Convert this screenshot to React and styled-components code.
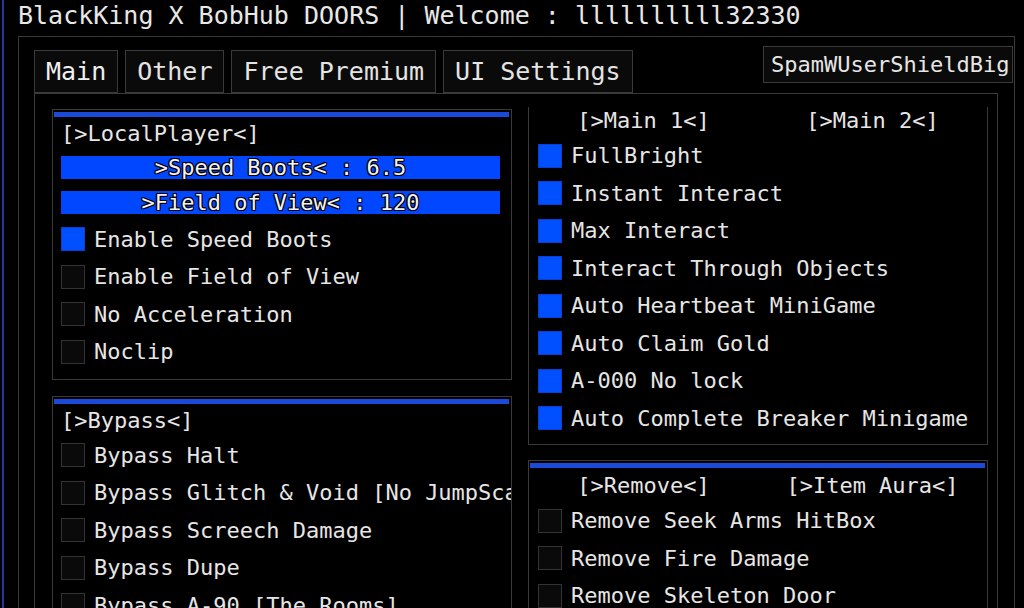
import React from 'react';
import styled, { createGlobalStyle } from 'styled-components';

const GlobalStyle = createGlobalStyle`
  html, body {
    margin: 0;
    padding: 0;
    background: #000;
    overflow: hidden;
  }
  body {
    width: 1024px;
    height: 608px;
    font-family: "DejaVu Sans Mono", "Liberation Mono", monospace;
    color: #e6e6e6;
  }
`;

const Screen = styled.div`
  display: flex;
  height: 608px;
  overflow: hidden;
  background: #000;
`;

const EdgeStripe = styled.div`
  flex: 0 0 2px;
  margin-left: 2px;
  background: #2234a8;
`;

const Window = styled.div`
  flex: 1;
  min-width: 0;
  display: flex;
  flex-direction: column;
  padding-left: 14px;
`;

const Title = styled.div`
  padding-top: 1px;
  font-size: 25px;
  white-space: nowrap;
  color: #e8e8e8;
`;

const OuterFrame = styled.div`
  margin-top: 6px;
  width: 997px;
  flex: 1;
  min-height: 0;
  box-sizing: border-box;
  border: 1px solid #3a3a3a;
  border-bottom: none;
  padding: 9px 0 0 15px;
  display: flex;
  flex-direction: column;
`;

const TabRow = styled.div`
  display: flex;
  align-items: flex-start;
  height: 47px;
`;

const Tab = styled.div`
  margin-top: 4px;
  margin-right: 7px;
  height: 43px;
  box-sizing: border-box;
  padding: 0 11px;
  display: flex;
  align-items: center;
  font-size: 25px;
  background: #0a0a0a;
  border: 1px solid #3a3a3a;
  color: ${(p) => (p.$active ? '#f0f0f0' : '#e4e4e4')};
  white-space: nowrap;
`;

const SpamBox = styled.div`
  margin-left: auto;
  margin-right: 1px;
  width: 250px;
  height: 37px;
  box-sizing: border-box;
  padding-left: 7px;
  display: flex;
  align-items: center;
  font-size: 22px;
  background: #0a0a0a;
  border: 1px solid #3a3a3a;
  white-space: nowrap;
  overflow: hidden;
`;

const ContentFrame = styled.div`
  flex: 1;
  min-height: 0;
  width: 964px;
  box-sizing: border-box;
  border: 1px solid #3a3a3a;
  border-bottom: none;
  padding: 13px 9px 0 17px;
`;

const Columns = styled.div`
  display: grid;
  grid-template-columns: 460px 460px;
  column-gap: 16px;
  align-items: start;
`;

const LeftColumn = styled.div`
  padding-top: 2px;
  display: flex;
  flex-direction: column;
  gap: 16px;
`;

const RightColumn = styled.div`
  overflow: hidden;
  display: flex;
  flex-direction: column;
  gap: 15px;
  height: 600px;
`;

const Panel = styled.section`
  box-sizing: border-box;
  border: 1px solid #3a3a3a;
  background: #000;
  overflow: hidden;
  margin-top: ${(p) => (p.$scrolled ? '-12px' : '0')};
  flex-shrink: 0;
`;

const TopBar = styled.div`
  height: 5px;
  margin: 2px 2px 0 1px;
  background: #1c4ad8;
`;

const Header = styled.div`
  height: 32px;
  display: flex;
  align-items: center;
  padding-left: 8px;
  font-size: 22px;
  white-space: nowrap;
`;

const SplitHeader = styled.div`
  height: 34px;
  display: grid;
  grid-template-columns: 1fr 1fr;
  align-items: center;
  font-size: 22px;
  white-space: nowrap;
  text-align: center;
`;

const Body = styled.div`
  padding: 0 11px ${(p) => p.$bottom ?? 9}px ${(p) => p.$inset || 8}px;
`;

const Slider = styled.div`
  height: 23px;
  margin-top: ${(p) => p.$gap}px;
  background: #0047ff;
  display: flex;
  align-items: center;
  justify-content: center;
  font-size: 22px;
  color: #f2f2f2;
  white-space: nowrap;
  text-shadow:
    -1px -1px 0 #000, 1px -1px 0 #000, -1px 1px 0 #000, 1px 1px 0 #000,
    0 -1px 0 #000, 0 1px 0 #000, -1px 0 0 #000, 1px 0 0 #000;
`;

const RowList = styled.div`
  margin-top: ${(p) => p.$gap || 0}px;
`;

const Row = styled.div`
  height: 37.5px;
  display: flex;
  align-items: center;
  gap: 9px;
  font-size: 22px;
  white-space: nowrap;
`;

const Box = styled.span`
  flex: 0 0 24px;
  height: 24px;
  box-sizing: border-box;
  border: 1px solid ${(p) => (p.$on ? '#0a3fd0' : '#333')};
  background: ${(p) => (p.$on ? '#0050ff' : '#0a0a0a')};
`;

const Toggle = ({ on, children }) => (
  <Row>
    <Box $on={on} />
    <span>{children}</span>
  </Row>
);

const localToggles = [
  ['Enable Speed Boots', true],
  ['Enable Field of View', false],
  ['No Acceleration', false],
  ['Noclip', false],
];

const bypassToggles = [
  'Bypass Halt',
  'Bypass Glitch & Void [No JumpScare]',
  'Bypass Screech Damage',
  'Bypass Dupe',
  'Bypass A-90 [The Rooms]',
];

const mainToggles = [
  'FullBright',
  'Instant Interact',
  'Max Interact',
  'Interact Through Objects',
  'Auto Heartbeat MiniGame',
  'Auto Claim Gold',
  'A-000 No lock',
  'Auto Complete Breaker Minigame',
];

const removeToggles = [
  'Remove Seek Arms HitBox',
  'Remove Fire Damage',
  'Remove Skeleton Door',
];

export default function App() {
  return (
    <>
      <GlobalStyle />
      <Screen>
        <EdgeStripe />
        <Window>
          <Title>BlackKing X BobHub DOORS | Welcome : llllllllll32330</Title>
          <OuterFrame>
            <TabRow>
              <Tab $active>Main</Tab>
              <Tab>Other</Tab>
              <Tab>Free Premium</Tab>
              <Tab>UI Settings</Tab>
              <SpamBox>SpamWUserShieldBig</SpamBox>
            </TabRow>
            <ContentFrame>
              <Columns>
                <LeftColumn>
                  <Panel>
                    <TopBar />
                    <Header>[&gt;LocalPlayer&lt;]</Header>
                    <Body>
                      <Slider $gap={7}>&gt;Speed Boots&lt; : 6.5</Slider>
                      <Slider $gap={12}>&gt;Field of View&lt; : 120</Slider>
                      <RowList $gap={6.25}>
                        {localToggles.map(([label, on]) => (
                          <Toggle key={label} on={on}>{label}</Toggle>
                        ))}
                      </RowList>
                    </Body>
                  </Panel>
                  <Panel>
                    <TopBar />
                    <Header>[&gt;Bypass&lt;]</Header>
                    <Body>
                      <RowList>
                        {bypassToggles.map((label) => (
                          <Toggle key={label}>{label}</Toggle>
                        ))}
                      </RowList>
                    </Body>
                  </Panel>
                </LeftColumn>
                <RightColumn>
                  <Panel $scrolled>
                    <TopBar />
                    <SplitHeader>
                      <span>[&gt;Main 1&lt;]</span>
                      <span>[&gt;Main 2&lt;]</span>
                    </SplitHeader>
                    <Body $inset={9} $bottom={7}>
                      <RowList>
                        {mainToggles.map((label) => (
                          <Toggle key={label} on>{label}</Toggle>
                        ))}
                      </RowList>
                    </Body>
                  </Panel>
                  <Panel>
                    <TopBar />
                    <SplitHeader>
                      <span>[&gt;Remove&lt;]</span>
                      <span>[&gt;Item Aura&lt;]</span>
                    </SplitHeader>
                    <Body $inset={9}>
                      <RowList>
                        {removeToggles.map((label) => (
                          <Toggle key={label}>{label}</Toggle>
                        ))}
                      </RowList>
                    </Body>
                  </Panel>
                </RightColumn>
              </Columns>
            </ContentFrame>
          </OuterFrame>
        </Window>
      </Screen>
    </>
  );
}
